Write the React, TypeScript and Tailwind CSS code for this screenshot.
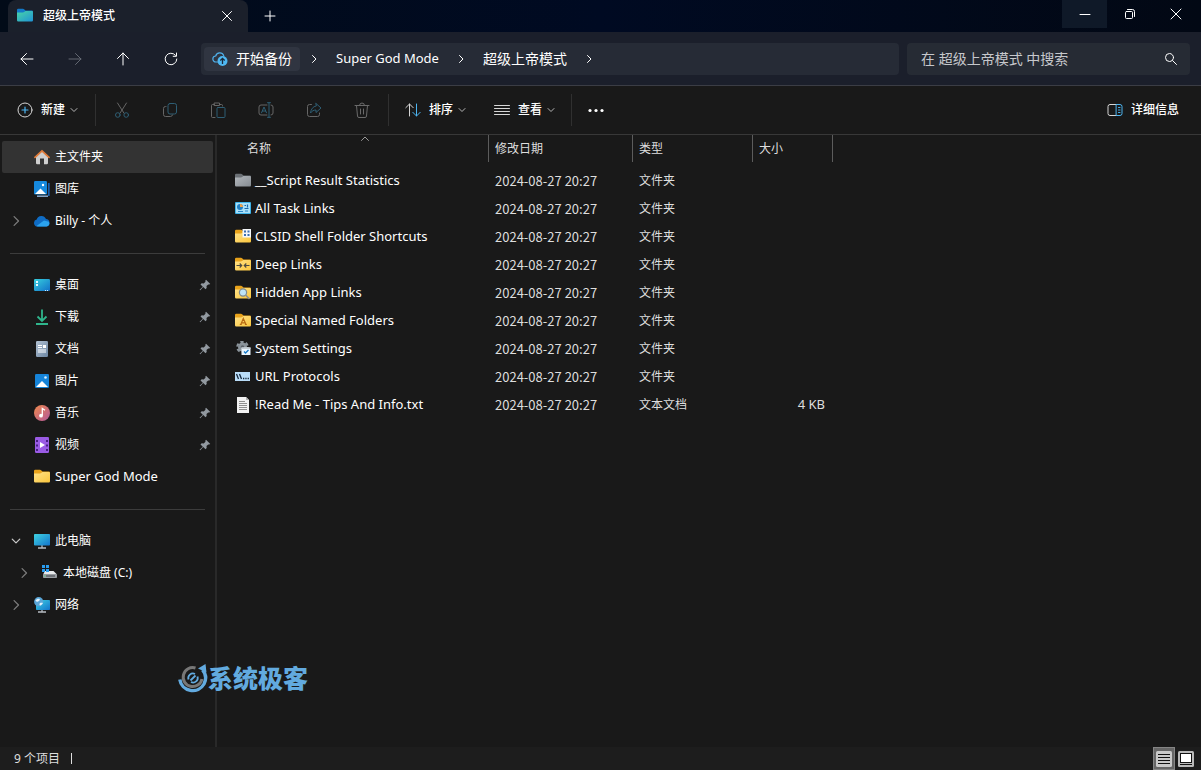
import React, { useState } from 'react';

type IconProps = { className?: string };

const stroke = {
  fill: 'none',
  stroke: 'currentColor',
  strokeLinecap: 'round' as const,
  strokeLinejoin: 'round' as const,
};

const Chevron: React.FC<{ dir: 'right' | 'down' | 'up'; className?: string }> = ({ dir, className = '' }) => {
  const paths = { right: 'M2.5 0.5 6 4 2.5 7.5', down: 'M1 2.5 4 5.5 7 2.5', up: 'M0.5 5.5 4 2 7.5 5.5' };
  return (
    <svg viewBox="0 0 8 8" className={className} {...stroke}>
      <path d={paths[dir]} />
    </svg>
  );
};

/* ---------- folder variants ---------- */

const FolderBase: React.FC<{ id: string; back: string; from: string; to: string; children?: React.ReactNode }> = ({ id, back, from, to, children }) => (
  <svg viewBox="0 1 16 16" className="w-4 h-4 shrink-0">
    <defs>
      <linearGradient id={id} x1="0" y1="0" x2="1" y2="1">
        <stop offset="0" stopColor={from} />
        <stop offset="1" stopColor={to} />
      </linearGradient>
    </defs>
    <path d="M0 3a1.200 1.200 0 0 1 1.200-1.200h4.800c.5 0 .8.2 1.100.5L8.500 3.500h6.300A1.200 1.200 0 0 1 16 4.700V8H0z" fill={back} />
    <path d="M0 5.500h6c.5 0 .8-.1 1.100-.4L8.500 4h6.300A1.200 1.200 0 0 1 16 5.200v8a1.200 1.200 0 0 1-1.200 1.200H1.200A1.200 1.200 0 0 1 0 13.200z" fill={`url(#${id})`} />
    {children}
  </svg>
);

const YellowFolder: React.FC<{ id: string; children?: React.ReactNode }> = ({ id, children }) => (
  <FolderBase id={id} back="#e9a31b" from="#ffe28a" to="#fbc63c">{children}</FolderBase>
);

const TaskIcon = () => (
  <svg viewBox="0 1 16 16" className="w-4 h-4 shrink-0">
    <rect y="2" width="16" height="12" rx="1" fill="#3fb4ea" />
    <rect x="1" y="3" width="14" height="10" fill="#a9dff8" />
    <circle cx="5" cy="7" r="3" fill="#1f7fc4" />
    <path d="M5 7V4a3 3 0 0 1 3 3z" fill="#f0a24a" />
    <path d="M9.500 5.500h1.500M12.500 4.500v3M9.500 8.500h4" stroke="#1a66a8" strokeWidth="1.200" />
    <path d="M3 11.500h5M10 11h3" stroke="#2a86c8" />
  </svg>
);

const SettingsIcon = () => (
  <svg viewBox="0 1 16 16" className="w-4 h-4 shrink-0">
    <circle cx="7.500" cy="7" r="4.500" fill="#8b949b" />
    <circle cx="7.500" cy="7" r="5.200" fill="none" stroke="#8b949b" strokeWidth="2.200" strokeDasharray="3.200 2.245" />
    <circle cx="7.500" cy="7" r="1.800" fill="#5b636a" />
    <rect x="6.500" y="7.500" width="9" height="7.500" fill="#e9f3fb" />
    <rect x="6.500" y="7.500" width="9" height="1.500" fill="#c4ccd2" />
    <path d="m9 11.500 1.500 1.500 3-3" fill="none" stroke="#1379c9" strokeWidth="1.300" />
  </svg>
);

const UrlIcon = () => (
  <svg viewBox="0 0 16 16" className="w-4 h-4 shrink-0">
    <rect y="3" width="15" height="9" fill="#b9dcf7" />
    <path d="m1.500 5 2 5M4.500 5l2 5" stroke="#15293d" strokeWidth="1.300" />
    <path d="M8 9.500h1.300M10.300 9.500h1.300M12.600 9.500h1.300" stroke="#15293d" strokeWidth="1.500" />
  </svg>
);

const TextFileIcon = () => (
  <svg viewBox="0 0 16 16" className="w-4 h-4 shrink-0">
    <path d="M2 0h9l3 3v13H2z" fill="#f2f2f2" />
    <path d="M11 0v3h3z" fill="#b4b4b4" />
    <path d="M4 4.500h6M4 6.500h8M4 8.500h8M4 10.500h8M4 12.500h8" stroke="#8f8f8f" />
  </svg>
);

/* ---------- navigation pane icons ---------- */

const HomeIcon = () => (
  <svg viewBox="0 0 16 16" className="w-4 h-4 shrink-0">
    <path d="M2 7.500 8 2l6 5.500V14a1.200 1.200 0 0 1-1.200 1.200H10V9.500H6v5.700H3.200A1.200 1.200 0 0 1 2 14z" fill="#cfcfcf" />
    <path d="M1 8.300 8 1.800l7 6.500" fill="none" stroke="#e07b39" strokeWidth="1.800" strokeLinecap="round" strokeLinejoin="round" />
  </svg>
);

const GalleryIcon = () => (
  <svg viewBox="0 0 16 16" className="w-4 h-4 shrink-0">
    <path d="M14.800 2v13" fill="none" stroke="#1b5fae" strokeWidth="1.800" />
    <path d="M3 15.200h11" stroke="#8fb4dc" strokeWidth="1.400" />
    <rect width="13" height="13.500" rx="1.200" fill="#1689dd" />
    <path d="m1 13 5.500-5.500L12 13z" fill="#fff" />
    <circle cx="9" cy="4" r="1.200" fill="#fff" />
  </svg>
);

const OneDriveIcon = () => (
  <svg viewBox="0 0 16 16" className="w-4 h-4 shrink-0">
    <path d="M3.500 13.500a3.500 3.500 0 0 1-.8-6.900 5 5 0 0 1 9.300-.6 3.800 3.800 0 0 1 .5 7.500z" fill="#0f6cc4" />
    <path d="M2.500 13 10 7.500l4.800 1.200a3 3 0 0 1-2.300 4.800h-9z" fill="#2ba3ef" />
  </svg>
);

const DesktopIcon = () => (
  <svg viewBox="0 0 16 16" className="w-4 h-4 shrink-0">
    <defs>
      <linearGradient id="desk" x1="0" y1="0" x2="1" y2="1">
        <stop offset="0" stopColor="#37d0de" />
        <stop offset="1" stopColor="#1270c8" />
      </linearGradient>
    </defs>
    <rect y="2" width="16" height="12" rx="1.200" fill="url(#desk)" />
    <path d="M2 4h2v2H2zM2 7h2v2H2z" fill="#e7fbff" />
    <path d="M11 13.500h1M13 13.500h1" stroke="#cdeaff" />
  </svg>
);

const DownloadIcon = () => (
  <svg viewBox="0 0 16 16" className="w-4 h-4 shrink-0" fill="none" stroke="#2fb58c" strokeWidth="1.800">
    <path d="M8 .5v11M3.500 7.500 8 12l4.500-4.500M2 15h12" />
  </svg>
);

const DocumentIcon = () => (
  <svg viewBox="0 0 16 16" className="w-4 h-4 shrink-0">
    <defs>
      <linearGradient id="doc" x1="0" y1="0" x2="1" y2="1">
        <stop offset="0" stopColor="#b3c2d3" />
        <stop offset="1" stopColor="#6c86a3" />
      </linearGradient>
    </defs>
    <rect x="2" width="12" height="16" rx="1.200" fill="url(#doc)" />
    <path d="M4 4.500h4M4 6.500h4M4 9h8M4 11h8" stroke="#fff" strokeWidth="1.200" />
    <path d="M9 4h3v3H9z" fill="#fff" />
  </svg>
);

const PictureIcon = () => (
  <svg viewBox="0 0 16 16" className="w-4 h-4 shrink-0">
    <rect x="1" y="1" width="14" height="14" rx="1.200" fill="#1583d8" />
    <path d="m2 14 6-6 6 6z" fill="#fff" />
    <circle cx="11.500" cy="4.500" r="1.300" fill="#d6eeff" />
  </svg>
);

const MusicIcon = () => (
  <svg viewBox="0 0 16 16" className="w-4 h-4 shrink-0">
    <defs>
      <linearGradient id="music" x1="0" y1="0" x2="1" y2="1">
        <stop offset="0" stopColor="#f08a4c" />
        <stop offset="1" stopColor="#b2579b" />
      </linearGradient>
    </defs>
    <circle cx="8" cy="8" r="8" fill="url(#music)" />
    <circle cx="7" cy="10.700" r="1.900" fill="#fff" />
    <path d="M8.300 10.500V3.500l2.700 1.800" fill="none" stroke="#fff" strokeWidth="1.300" />
  </svg>
);

const VideoIcon = () => (
  <svg viewBox="0 0 16 16" className="w-4 h-4 shrink-0">
    <rect x="1" width="14" height="16" rx="1.200" fill="#9a5be4" />
    <path d="M3 3v12M13 3v12" stroke="#3f1a78" strokeWidth="1.800" strokeDasharray="2 2.500" />
    <path d="M6 5v6l5-3z" fill="#fff" />
  </svg>
);

const MonitorShape: React.FC<{ id: string }> = ({ id }) => (
  <>
    <defs>
      <linearGradient id={id} x1="0" y1="0" x2="1" y2="1">
        <stop offset="0" stopColor="#3fd3e2" />
        <stop offset="1" stopColor="#1374cc" />
      </linearGradient>
    </defs>
    <path d="M4 15h8M8 12v3" stroke="#b6bcc2" strokeWidth="1.300" />
  </>
);

const ComputerIcon = () => (
  <svg viewBox="0 0 16 16" className="w-4 h-4 shrink-0">
    <MonitorShape id="pc" />
    <rect y="1" width="16" height="11.500" rx=".8" fill="url(#pc)" />
  </svg>
);

const NetworkIcon = () => (
  <svg viewBox="0 0 16 16" className="w-4 h-4 shrink-0">
    <MonitorShape id="net" />
    <rect x="2" y="3" width="14" height="10" rx=".8" fill="url(#net)" />
    <circle cx="4.700" cy="4.700" r="4.600" fill="#5aa6d8" />
    <path d="M1.500 3.500c1-1.500 3-2 4-1.500s0 2-1.500 2.500-2 0-2.500-1zM6 6c1-.5 2.500-.5 2.800 0S7.500 8 6.500 8.500 5 7 6 6z" fill="#e5f4fd" />
  </svg>
);

const DiskIcon = () => (
  <svg viewBox="1 0 16 16" className="w-4 h-4 shrink-0">
    <path d="M4 6h8.500L16 9.500H2z" fill="#e8eaec" />
    <path d="M1 0h3v3H1zM5 0h3v3H5zM1 4h3v3H1zM5 4h3v3H5z" fill="#2a9df0" />
    <rect x="2" y="9" width="14" height="4" rx=".8" fill="#9a9ea3" />
    <path d="M5 11h9" stroke="#42474c" />
    <circle cx="4" cy="11" r=".7" fill="#4bd07b" />
  </svg>
);

const PinIcon = () => (
  <svg viewBox="0 0 12 12" className="w-3 h-3 shrink-0">
    <path d="M7 .8 11.300 5l-1.300.5-.8-.1-1.700 1.700.2 2-1.200 1.200L4.200 8 1.300 11.300.6 10.700 3.800 7.700 1.500 5.400l1.200-1.200 2 .2 1.800-1.700L6.300 1.800z" fill="#9299a0" />
  </svg>
);

/* ---------- command bar icons ---------- */

const PlusCircleIcon = () => (
  <svg viewBox="0 0 16 16" className="w-4 h-4" {...stroke}>
    <circle cx="8" cy="8" r="7" stroke="#d6d6d6" />
    <path d="M8 5v6M5 8h6" stroke="#4cb4f0" strokeWidth="1.200" />
  </svg>
);

const commandIcons: { label: string; icon: React.ReactNode }[] = [
  {
    label: '剪切',
    icon: (
      <>
        <path d="M3.500 1 10 11.200M12.500 1 6 11.200" stroke="#666" />
        <circle cx="3.800" cy="13" r="2.300" stroke="#2e5e74" />
        <circle cx="12.200" cy="13" r="2.300" stroke="#2e5e74" />
      </>
    ),
  },
  {
    label: '复制',
    icon: (
      <>
        <rect x="6" y="1.500" width="8.500" height="10.500" rx="2" stroke="#2e5e74" />
        <path d="M4 4.500h-.5a2 2 0 0 0-2 2v6a2 2 0 0 0 2 2h5a2 2 0 0 0 2-1.500" stroke="#666" />
      </>
    ),
  },
  {
    label: '粘贴',
    icon: (
      <>
        <path d="M4.500 2.500h-2a1 1 0 0 0-1 1v11a1 1 0 0 0 1 1H5M9.500 2.500h2a1 1 0 0 1 1 1V4M4.500 1h5v2.500h-5z" stroke="#666" />
        <rect x="7" y="5.500" width="8" height="10" rx="1" stroke="#2e5e74" />
      </>
    ),
  },
  {
    label: '重命名',
    icon: (
      <>
        <path d="M9 3H3a2 2 0 0 0-2 2v6a2 2 0 0 0 2 2h6M13 3a2 2 0 0 1 2 2v6a2 2 0 0 1-2 2" stroke="#666" />
        <path d="M3.500 10.800 6 5l2.500 5.800M4.300 9h3.400M9.500.7h3M9.500 15.300h3M11 .7v14.600" stroke="#2e5e74" />
      </>
    ),
  },
  {
    label: '共享',
    icon: (
      <>
        <path d="M5.500 2.500h-2a2 2 0 0 0-2 2v8a2 2 0 0 0 2 2h8a2 2 0 0 0 2-2V11" stroke="#666" />
        <path d="M10 1.500 15 6l-5 4.500V8C7.500 8 6 9 4.500 11 5 7 7 4.500 10 4z" stroke="#2e5e74" />
      </>
    ),
  },
  {
    label: '删除',
    icon: <path d="M1 3.500h14M5.500 3.500a2.500 2.500 0 0 1 5 0M2.500 3.500l1 10.500a1.500 1.500 0 0 0 1.500 1.500h6a1.500 1.500 0 0 0 1.500-1.500l1-10.500M6.500 7v5M9.500 7v5" stroke="#6a6a6a" />,
  },
];

/* ---------- data ---------- */

type NavItem = { label: string; icon: React.ReactNode; pinned?: boolean; expand?: 'right' | 'down'; nested?: boolean; active?: boolean };

const navGroups: NavItem[][] = [
  [
    { label: '主文件夹', icon: <HomeIcon />, active: true },
    { label: '图库', icon: <GalleryIcon /> },
    { label: 'Billy - 个人', icon: <OneDriveIcon />, expand: 'right' },
  ],
  [
    { label: '桌面', icon: <DesktopIcon />, pinned: true },
    { label: '下载', icon: <DownloadIcon />, pinned: true },
    { label: '文档', icon: <DocumentIcon />, pinned: true },
    { label: '图片', icon: <PictureIcon />, pinned: true },
    { label: '音乐', icon: <MusicIcon />, pinned: true },
    { label: '视频', icon: <VideoIcon />, pinned: true },
    { label: 'Super God Mode', icon: <YellowFolder id="navFolder" /> },
  ],
  [
    { label: '此电脑', icon: <ComputerIcon />, expand: 'down' },
    { label: '本地磁盘 (C:)', icon: <DiskIcon />, expand: 'right', nested: true },
    { label: '网络', icon: <NetworkIcon />, expand: 'right' },
  ],
];

const modified = '2024-08-27 20:27';

const files: { name: string; icon: React.ReactNode; type: string; size?: string }[] = [
  { name: '__Script Result Statistics', icon: <FolderBase id="grayFolder" back="#6b7075" from="#b3b8bd" to="#868c92" />, type: '文件夹' },
  { name: 'All Task Links', icon: <TaskIcon />, type: '文件夹' },
  {
    name: 'CLSID Shell Folder Shortcuts',
    icon: (
      <YellowFolder id="clsid">
        <rect x="7.500" y="1" width="8.500" height="8.500" fill="#f4f7fa" />
        <path d="M9 2.500h2v2H9zM12.500 2.500h2v2h-2zM9 6h2v2H9zM12.500 6h2v2h-2z" fill="#3c6fb0" />
      </YellowFolder>
    ),
    type: '文件夹',
  },
  {
    name: 'Deep Links',
    icon: (
      <YellowFolder id="deep">
        <path d="M1.500 9.500h5M4.700 7.500l2 2-2 2M14.500 9.500h-5M11.300 7.500l-2 2 2 2" fill="none" stroke="#4c4a40" strokeWidth="1.200" />
      </YellowFolder>
    ),
    type: '文件夹',
  },
  {
    name: 'Hidden App Links',
    icon: (
      <YellowFolder id="hidden">
        <circle cx="8" cy="8.500" r="3.600" fill="#bfe4f7" stroke="#7d8a92" strokeWidth="1.200" />
        <path d="m10.800 11.300 3.700 3.700" stroke="#8d8f91" strokeWidth="1.600" />
      </YellowFolder>
    ),
    type: '文件夹',
  },
  {
    name: 'Special Named Folders',
    icon: (
      <YellowFolder id="special">
        <path d="M5.800 12.500 8.300 6.500l2.700 6M6.700 10.800h3.200M4.800 12.500h2M9.900 12.500h2" fill="none" stroke="#b86a12" strokeWidth="1.200" />
      </YellowFolder>
    ),
    type: '文件夹',
  },
  { name: 'System Settings', icon: <SettingsIcon />, type: '文件夹' },
  { name: 'URL Protocols', icon: <UrlIcon />, type: '文件夹' },
  { name: '!Read Me - Tips And Info.txt', icon: <TextFileIcon />, type: '文本文档', size: '4 KB' },
];

/* ---------- page parts ---------- */

const TitleBar = () => (
  <header className="flex h-8 pl-2 pr-[2px] bg-gradient-to-r from-[#020b18] via-[#000a22] to-[#020814]">
    <div className="flex items-center w-60 pl-[9px] pr-[15px] rounded-t-lg bg-[#1b202b]">
      <FolderBase id="tabFolder" back="#1378c8" from="#4ad6a4" to="#1f93d6" />
      <span className="flex-1 ml-[10px] text-xs font-medium">超级上帝模式</span>
      <button aria-label="关闭标签页">
        <svg viewBox="0 0 12 12" className="w-3 h-3" {...stroke}><path d="m1.500 1.500 9 9M10.500 1.500l-9 9" /></svg>
      </button>
    </div>
    <button aria-label="新建标签页" className="ml-4">
      <svg viewBox="0 0 12 12" className="w-3 h-3" {...stroke}><path d="M6 1v10M1 6h10" /></svg>
    </button>
    <div className="flex h-7 ml-auto">
      <button aria-label="最小化" className="flex items-center justify-center w-[45px] bg-[#0f1928]">
        <svg viewBox="0 0 12 12" className="w-3 h-3" {...stroke}><path d="M1 6.500h10" /></svg>
      </button>
      <button aria-label="还原" className="flex items-center justify-center w-[46px]">
        <svg viewBox="0 0 12 12" className="w-3 h-3" {...stroke}>
          <rect x="1.500" y="3.500" width="7" height="7" rx="1" />
          <path d="M3.500 1.500h5a2 2 0 0 1 2 2v5" />
        </svg>
      </button>
      <button aria-label="关闭" className="flex items-center justify-center w-[46px]">
        <svg viewBox="0 0 12 12" className="w-3 h-3" {...stroke}><path d="m1 1 10 10M11 1 1 11" /></svg>
      </button>
    </div>
  </header>
);

const navButtons = [
  { label: '后退', d: 'M14 8H2M7.500 2.500 2 8l5.500 5.500', tone: 'text-white' },
  { label: '前进', d: 'M2 8h12M8.500 2.500 14 8l-5.500 5.500', tone: 'text-[#646973]' },
  { label: '向上', d: 'M8 14V2M2.500 7.500 8 2l5.500 5.500', tone: 'text-white' },
  { label: '刷新', d: 'M13.800 8A5.800 5.800 0 1 1 12.500 4.300M13.500 2v3.300h-3.300', tone: 'text-white' },
];

const AddressBar = () => (
  <div className="flex items-center h-[54px] pl-[3px] pr-[11px] border-b border-[#3b3d45] bg-[#1b1f2b]">
    {navButtons.map(b => (
      <button key={b.label} aria-label={b.label} className={`flex items-center justify-center w-12 h-8 ${b.tone}`}>
        <svg viewBox="0 0 16 16" className="w-4 h-4" {...stroke}><path d={b.d} /></svg>
      </button>
    ))}
    <nav className="flex items-center flex-1 h-8 ml-[6px] pl-[3px] rounded bg-[#262b36] text-sm">
      <button className="flex items-center h-6 gap-2 px-2 mr-[6px] rounded bg-[#303541]">
        <svg viewBox="0 0 16 16" className="w-4 h-4">
          <path d="M5.500 11H4a3 3 0 0 1-.3-6 4.200 4.200 0 0 1 8-.4" fill="none" stroke="#4fb0ea" strokeWidth="1.200" strokeLinecap="round" />
          <circle cx="10.500" cy="10" r="5" fill="#4fb8f2" />
          <path d="M10.500 13V7.500M8.300 9.500l2.200-2.200 2.200 2.200" fill="none" stroke="#1b2a3a" strokeWidth="1.300" />
        </svg>
        开始备份
      </button>
      <span className="flex justify-center w-4"><Chevron dir="right" className="w-2 h-2" /></span>
      <a href="#super" className="px-[14px] text-[13px]">Super God Mode</a>
      <span className="flex justify-center w-4"><Chevron dir="right" className="w-2 h-2" /></span>
      <a href="#mode" className="px-[14px]">超级上帝模式</a>
      <span className="flex justify-center w-4"><Chevron dir="right" className="w-2 h-2" /></span>
    </nav>
    <label className="flex items-center w-[283px] h-8 ml-2 pl-[14px] pr-3 rounded bg-[#262b34]">
      <input type="text" aria-label="搜索" placeholder="在 超级上帝模式 中搜索" className="flex-1 min-w-0 bg-transparent text-sm outline-none placeholder:text-[#c6c8cc]" />
      <svg viewBox="0 0 14 14" className="w-[14px] h-[14px]" {...stroke}>
        <circle cx="5.500" cy="5.500" r="4" />
        <path d="m8.500 8.500 4 4" />
      </svg>
    </label>
  </div>
);

const Divider: React.FC<IconProps> = ({ className = '' }) => <span className={`w-px h-8 bg-[#303030] ${className}`} />;

const MenuButton: React.FC<{ label: string; icon: React.ReactNode }> = ({ label, icon }) => (
  <button className="flex items-center h-8 px-2">
    {icon}
    <span className="ml-2 mr-[5px] font-medium">{label}</span>
    <Chevron dir="down" className="w-2 h-2 text-[#b5b5b5]" />
  </button>
);

const CommandBar = () => (
  <div className="flex items-center h-[49px] pl-[9px] pr-[14px] border-b border-[#383838] text-xs">
    <MenuButton label="新建" icon={<PlusCircleIcon />} />
    <Divider className="ml-[9px] mr-[2px]" />
    {commandIcons.map(c => (
      <button key={c.label} aria-label={c.label} disabled className="flex items-center justify-center w-12 h-8">
        <svg viewBox="0 0 16 16" className="w-4 h-4" {...stroke}>{c.icon}</svg>
      </button>
    ))}
    <Divider className="ml-[2px] mr-2" />
    <MenuButton
      label="排序"
      icon={
        <svg viewBox="0 0 16 16" className="w-4 h-4" {...stroke}>
          <path d="M4.500 14V2M.8 5.700 4.500 2l3.700 3.700" stroke="#d6d6d6" />
          <path d="M11.500 2v12M7.800 10.300l3.700 3.700 3.700-3.700" stroke="#4cb4f0" />
        </svg>
      }
    />
    <span className="w-3" />
    <MenuButton
      label="查看"
      icon={<svg viewBox="0 0 16 16" className="w-4 h-4" {...stroke}><path d="M.5 3.500h15M.5 6.500h15M.5 9.500h15M.5 12.500h15" stroke="#d6d6d6" /></svg>}
    />
    <Divider className="mx-2" />
    <button aria-label="更多" className="px-2">
      <svg viewBox="0 0 16 16" className="w-4 h-4" fill="currentColor">
        <circle cx="2" cy="8.500" r="1.600" />
        <circle cx="8" cy="8.500" r="1.600" />
        <circle cx="14" cy="8.500" r="1.600" />
      </svg>
    </button>
    <button className="flex items-center gap-2 h-8 px-2 ml-auto font-medium">
      <svg viewBox="0 0 16 16" className="w-4 h-4" {...stroke}>
        <path d="M9.500 2.500H3a2 2 0 0 0-2 2v7a2 2 0 0 0 2 2h6.500" stroke="#d6d6d6" />
        <path d="M9.500 2.500H13a2 2 0 0 1 2 2v7a2 2 0 0 1-2 2H9.500zM11.500 5.500h1.500M11.500 8h1.500M11.500 10.500h1.500" stroke="#4cb4f0" />
      </svg>
      详细信息
    </button>
  </div>
);

const Sidebar = () => (
  <aside className="w-[217px] shrink-0 pt-[6px] border-r-2 border-[#292929] text-xs">
    {navGroups.map((group, i) => (
      <React.Fragment key={i}>
        {i > 0 && (
          <div className="flex items-center h-8 px-[10px]">
            <hr className="flex-1 border-[#3c3c3c]" />
          </div>
        )}
        <ul>
          {group.map(item => (
            <li key={item.label} className="px-[2px]">
              <a href="#nav" className={`flex items-center h-8 pr-[2px] rounded-xs ${item.nested ? 'pl-4' : 'pl-2'} ${item.active ? 'bg-[#333333]' : ''}`}>
                <span className="flex justify-center w-3 mr-3">
                  {item.expand && <Chevron dir={item.expand} className={`w-[10px] h-[10px] ${item.expand === 'down' ? 'text-[#c8c8c8]' : 'text-[#7c7c7c]'}`} />}
                </span>
                {item.icon}
                <span className={`flex-1 ml-[5px] ${item.label === 'Super God Mode' ? 'text-[13px]' : ''}`}>{item.label}</span>
                {item.pinned && <PinIcon />}
              </a>
            </li>
          ))}
        </ul>
      </React.Fragment>
    ))}
  </aside>
);

const columns = [
  { label: '名称', width: 'w-[272px]', pad: 'pl-[30px]' },
  { label: '修改日期', width: 'w-36', pad: 'pl-[6px]' },
  { label: '类型', width: 'w-[120px]', pad: 'pl-[6px]' },
  { label: '大小', width: 'w-20', pad: 'pl-[6px]' },
];

const FileTable = () => {
  const [selected, setSelected] = useState<string | null>(null);

  return (
    <table className="table-fixed w-[616px] text-xs text-[#dedede]">
      <thead>
        <tr>
          {columns.map((c, i) => (
            <th key={c.label} className={`relative p-0 pb-[5px] font-normal text-left ${c.width}`}>
              {i === 0 && <Chevron dir="up" className="absolute left-[143px] top-0 w-[10px] h-2 text-[#9a9a9a]" />}
              <button className={`block w-full h-[27px] border-r border-[#5c5c5c] text-left ${c.pad}`}>{c.label}</button>
            </th>
          ))}
        </tr>
      </thead>
      <tbody>
        {files.map(f => (
          <tr key={f.name} onClick={() => setSelected(f.name)} className={`h-7 ${selected === f.name ? 'bg-[#333333]' : ''}`}>
            <td className="p-0 pl-[18px]">
              <span className="flex items-center gap-1 text-[13px] text-white whitespace-nowrap">
                {f.icon}
                {f.name}
              </span>
            </td>
            <td className="p-0 pl-[6px] font-['Noto_Sans_CJK_SC',sans-serif] text-[13px] whitespace-nowrap">{modified}</td>
            <td className="p-0 pl-[6px]">{f.type}</td>
            <td className="p-0 pr-2 text-right text-[13px]">{f.size}</td>
          </tr>
        ))}
      </tbody>
    </table>
  );
};

const Brand = () => (
  <div className="absolute left-[178px] bottom-[76px] flex items-center text-[#62aadf] pointer-events-none">
    <svg viewBox="0 0 30 30" className="w-[30px] h-[30px]" fill="none">
      <path d="M1.800 16.500a13 13 0 0 0 24.200 4.500c2.300-4.500 2-10-1.500-14" stroke="#62aadf" strokeWidth="3.400" />
      <path d="M20 5.500 27.500 1l1 8.500z" fill="#62aadf" />
      <path d="M17.500 5a9.500 9.500 0 1 0 6.500 11" stroke="#777777" strokeWidth="3" />
      <path d="M10.500 16.500a4.600 4.600 0 0 1 6.500-5.500M19.500 13.500a4.600 4.600 0 0 1-6.500 5.500" stroke="#62aadf" strokeWidth="1.800" />
      <path d="m12.500 17.500 5-5" stroke="#62aadf" strokeWidth="1.800" />
    </svg>
    <span className="text-[25px] leading-8 font-black">系统极客</span>
  </div>
);

const StatusBar = () => (
  <footer className="flex items-center h-[23px] pl-[14px] pr-[7px] bg-[#1d1d1d] text-xs text-[#dedede]">
    <span>9 个项目</span>
    <span className="w-px h-[11px] ml-[11px] bg-[#dedede]" />
    <button aria-label="详细信息视图" className="flex items-center justify-center w-[22px] h-full ml-auto border border-[#858585] bg-[#666666]">
      <svg viewBox="0 0 16 16" className="w-4 h-4">
        <rect width="16" height="16" rx="1.500" fill="#c9c9c9" />
        <path d="M2 3.500h12M2 6.500h12M2 9.500h12M2 12.500h12" stroke="#111" />
      </svg>
    </button>
    <button aria-label="大图标视图" className="ml-[3px]">
      <svg viewBox="0 0 16 16" className="block w-4 h-4">
        <rect width="16" height="16" rx="1.500" fill="#b9b9b9" />
        <rect x="2.500" y="2.500" width="11" height="9" fill="#fff" stroke="#111" />
        <path d="M2 13.500h12" stroke="#111" />
      </svg>
    </button>
  </footer>
);

const App: React.FC = () => (
  <div className="relative flex flex-col min-h-screen bg-[#191919] text-white font-['Noto_Sans','Noto_Sans_CJK_SC',sans-serif]">
    <TitleBar />
    <AddressBar />
    <CommandBar />
    <div className="flex flex-1">
      <Sidebar />
      <main className="flex-1 min-w-0">
        <FileTable />
      </main>
    </div>
    <StatusBar />
    <Brand />
  </div>
);

export default App;
